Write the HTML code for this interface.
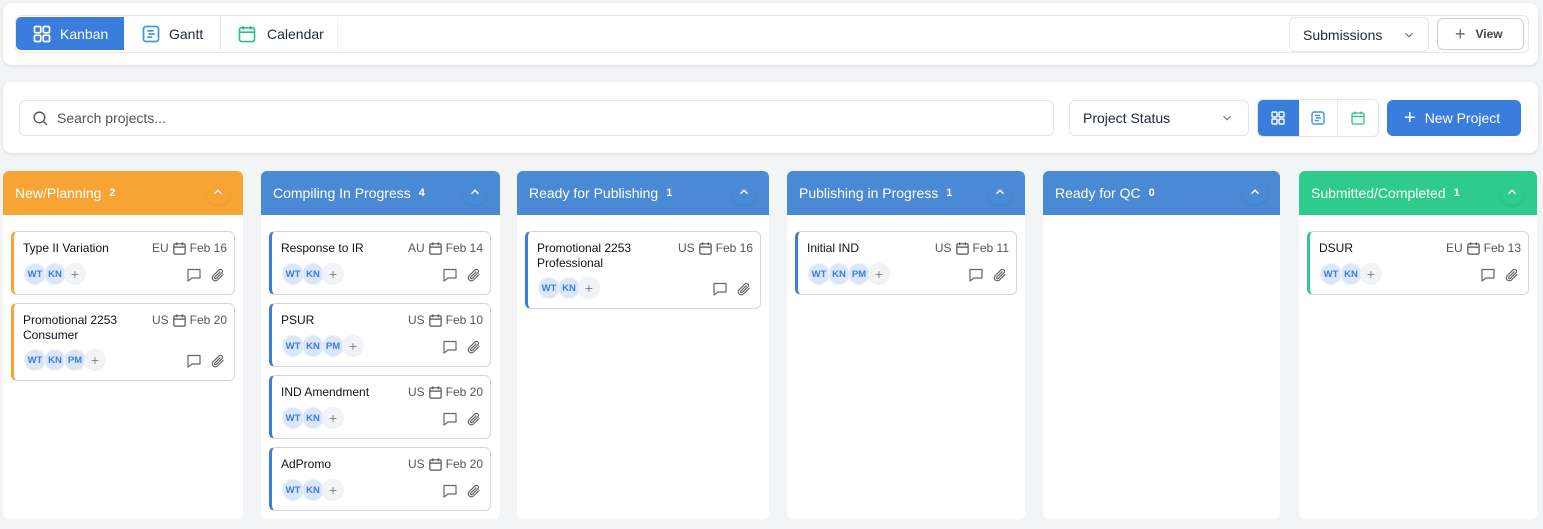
<!DOCTYPE html><html><head><style>
*{box-sizing:border-box;margin:0;padding:0}
body{width:1543px;height:529px;background:#f3f4f6;font-family:"Liberation Sans","DejaVu Sans",sans-serif;position:relative;overflow:hidden;color:#1f2937}
.a{position:absolute}
.card{position:absolute;background:#fff;border-radius:8px;box-shadow:0 1px 3px rgba(0,0,0,.12)}
.btn{position:absolute;display:flex;align-items:center;font-size:14px}
.col{position:absolute;top:171px;height:348px;background:#fff;border-radius:6px;overflow:hidden}
.hd{height:44px;color:#fff;font-size:14px;display:flex;align-items:center;padding-left:12px;position:relative}
.hd b{font-weight:normal}
.hd i{font-style:normal;font-size:11px;margin-left:8px;font-weight:bold}
.hd .ch{position:absolute;right:12px;top:8px;width:26px;height:26px;border-radius:50%;display:flex;align-items:center;justify-content:center;box-shadow:0 1px 2px rgba(0,0,0,.08)}
.k{position:absolute;background:#fff;border:1px solid #d3d8e0;border-left:3px solid;border-radius:6px;font-size:12px}
.k .t{position:absolute;left:9px;top:9px;line-height:15px;color:#111}
.k .m{position:absolute;right:7px;top:9px;color:#555;display:flex;align-items:center;gap:3px;line-height:15px}
.av{position:absolute;display:flex}
.av span{width:22px;height:22px;border-radius:50%;background:#dbe6f8;color:#3b7ddd;font-size:9.5px;font-weight:bold;display:flex;align-items:center;justify-content:center;margin-right:-2px;border:1px solid #eef2f8}
.av span.p{background:#f1f3f5;color:#888;font-size:14px;font-weight:normal}
.ic{position:absolute;right:8px;display:flex;gap:8px}
</style></head><body>
<svg width="0" height="0" style="position:absolute"><defs>
<symbol id="cal" viewBox="0 0 16 16"><rect x="2" y="3" width="12" height="11" rx="1.5" fill="none" stroke="currentColor" stroke-width="1.3"/><path d="M2 6.5h12M5 1.5v3M11 1.5v3" stroke="currentColor" stroke-width="1.3"/></symbol>
<symbol id="cm" viewBox="0 0 16 16"><path d="M2 2.5h12v8.5H6l-4 3z" fill="none" stroke="currentColor" stroke-width="1.2" stroke-linejoin="round"/></symbol>
<symbol id="cl" viewBox="0 0 16 16"><path d="M13 7.5l-5.5 5.5a3 3 0 0 1-4.3-4.3L9 2.9a2 2 0 0 1 2.9 2.9L6.2 11.5a1 1 0 0 1-1.4-1.4L10 4.9" fill="none" stroke="currentColor" stroke-width="1.2" stroke-linecap="round"/></symbol>
<symbol id="grid" viewBox="0 0 16 16"><g fill="none" stroke="currentColor" stroke-width="1.4"><rect x="2" y="2" width="5" height="5" rx="1"/><rect x="9" y="2" width="5" height="5" rx="1"/><rect x="2" y="9" width="5" height="5" rx="1"/><rect x="9" y="9" width="5" height="5" rx="1"/></g></symbol>
<symbol id="gantt" viewBox="0 0 16 16"><rect x="2" y="2" width="12" height="12" rx="2" fill="none" stroke="currentColor" stroke-width="1.4"/><path d="M5 5.5h5M6 8h5M5 10.5h4" stroke="currentColor" stroke-width="1.4"/></symbol>
<symbol id="up" viewBox="0 0 16 16"><path d="M4 10l4-4 4 4" fill="none" stroke="currentColor" stroke-width="1.6"/></symbol>
<symbol id="dn" viewBox="0 0 16 16"><path d="M4 6l4 4 4-4" fill="none" stroke="currentColor" stroke-width="1.2"/></symbol>
</defs></svg>

<div class="card" style="left:3px;top:3px;width:1535px;height:62px"></div>
<div class="a" style="left:15px;top:15px;width:1514px;height:38px;border:1px solid #e5e7eb;border-radius:6px"></div>
<div class="btn" style="left:16px;top:17px;width:108px;height:33px;background:#3b7ddd;color:#fff;border-radius:5px 0 0 5px;padding-left:16px"><svg width="20" height="20" style="color:#fff"><use href="#grid"/></svg><span style="margin-left:8px">Kanban</span></div>
<div class="btn" style="left:124px;top:17px;width:97px;height:33px;padding-left:17px;border-right:1px solid #e5e7eb"><svg width="20" height="20" style="color:#3b9ae6"><use href="#gantt"/></svg><span style="margin-left:8px">Gantt</span></div>
<div class="btn" style="left:221px;top:17px;width:117px;height:33px;padding-left:16px;border-right:1px solid #f0f1f3"><svg width="20" height="20" style="color:#22c77c"><use href="#cal"/></svg><span style="margin-left:10px">Calendar</span></div>
<div class="btn" style="left:1289px;top:17px;width:140px;height:35px;border:1px solid #e5e7eb;border-radius:6px;padding-left:13px">Submissions<svg width="14" height="14" style="margin-left:auto;margin-right:12px;color:#666"><use href="#dn"/></svg></div>
<div class="btn" style="left:1437px;top:18px;width:87px;height:32px;border:1px solid #c9ced6;border-radius:6px;padding-left:17px;font-size:12px;font-weight:bold;color:#444"><span style="font-size:18px;font-weight:normal;margin-right:10px;color:#666">+</span>View</div>

<div class="card" style="left:3px;top:82px;width:1535px;height:71px"></div>
<div class="btn" style="left:19px;top:100px;width:1035px;height:36px;border:1px solid #e2e5ea;border-radius:6px;padding-left:12px;color:#555"><svg width="17" height="17" viewBox="0 0 16 16"><circle cx="7" cy="7" r="5" fill="none" stroke="#555" stroke-width="1.3"/><path d="M11 11l3 3" stroke="#555" stroke-width="1.3"/></svg><span style="margin-left:8px">Search projects...</span></div>
<div class="btn" style="left:1069px;top:100px;width:180px;height:36px;border:1px solid #e2e5ea;border-radius:6px;padding-left:13px">Project Status<svg width="14" height="14" style="margin-left:auto;margin-right:14px;color:#666"><use href="#dn"/></svg></div>
<div class="a" style="left:1257px;top:99px;width:122px;height:38px;border:1px solid #e2e5ea;border-radius:6px;overflow:hidden;display:flex">
<div style="width:41px;background:#3b7ddd;display:flex;align-items:center;justify-content:center"><svg width="16" height="16" style="color:#fff"><use href="#grid"/></svg></div>
<div style="width:40px;border-right:1px solid #e5e7eb;display:flex;align-items:center;justify-content:center"><svg width="16" height="16" style="color:#3b9ae6"><use href="#gantt"/></svg></div>
<div style="width:40px;display:flex;align-items:center;justify-content:center"><svg width="16" height="16" style="color:#22c77c"><use href="#cal"/></svg></div></div>
<div class="btn" style="left:1387px;top:100px;width:134px;height:36px;background:#3b7ddd;color:#fff;border-radius:6px;padding-left:17px"><span style="font-size:20px;margin-right:9px;font-weight:300">+</span>New Project</div>

<div class="col" style="left:3px;width:240px"><div class="hd" style="background:#f6a535"><b>New/Planning</b><i>2</i><div class="ch"><svg width="14" height="14" style="color:#fff"><use href="#up"/></svg></div></div></div>
<div class="col" style="left:261px;width:239px"><div class="hd" style="background:#4a89d4"><b>Compiling In Progress</b><i>4</i><div class="ch"><svg width="14" height="14" style="color:#fff"><use href="#up"/></svg></div></div></div>
<div class="col" style="left:517px;width:252px"><div class="hd" style="background:#4a89d4"><b>Ready for Publishing</b><i>1</i><div class="ch"><svg width="14" height="14" style="color:#fff"><use href="#up"/></svg></div></div></div>
<div class="col" style="left:787px;width:238px"><div class="hd" style="background:#4a89d4"><b>Publishing in Progress</b><i>1</i><div class="ch"><svg width="14" height="14" style="color:#fff"><use href="#up"/></svg></div></div></div>
<div class="col" style="left:1043px;width:237px"><div class="hd" style="background:#4a89d4"><b>Ready for QC</b><i>0</i><div class="ch"><svg width="14" height="14" style="color:#fff"><use href="#up"/></svg></div></div></div>
<div class="col" style="left:1299px;width:238px"><div class="hd" style="background:#2ecb8c"><b>Submitted/Completed</b><i>1</i><div class="ch"><svg width="14" height="14" style="color:#fff"><use href="#up"/></svg></div></div></div>

<div class="k" style="left:11px;top:231px;width:224px;height:64px;border-left-color:#f6a535"><div class="t">Type II Variation</div><div class="m">EU <svg width="15" height="15"><use href="#cal"/></svg>Feb 16</div><div class="av" style="left:10px;top:31px"><span>WT</span><span>KN</span><span class="p">+</span></div><div class="ic" style="top:35px;color:#666"><svg width="16" height="16"><use href="#cm"/></svg><svg width="16" height="16"><use href="#cl"/></svg></div></div>
<div class="k" style="left:11px;top:303px;width:224px;height:78px;border-left-color:#f6a535"><div class="t">Promotional 2253<br>Consumer</div><div class="m">US <svg width="15" height="15"><use href="#cal"/></svg>Feb 20</div><div class="av" style="left:10px;top:45px"><span>WT</span><span>KN</span><span>PM</span><span class="p">+</span></div><div class="ic" style="top:49px;color:#666"><svg width="16" height="16"><use href="#cm"/></svg><svg width="16" height="16"><use href="#cl"/></svg></div></div>

<div class="k" style="left:269px;top:231px;width:222px;height:64px;border-left-color:#3b7ddd"><div class="t">Response to IR</div><div class="m">AU <svg width="15" height="15"><use href="#cal"/></svg>Feb 14</div><div class="av" style="left:10px;top:31px"><span>WT</span><span>KN</span><span class="p">+</span></div><div class="ic" style="top:35px;color:#666"><svg width="16" height="16"><use href="#cm"/></svg><svg width="16" height="16"><use href="#cl"/></svg></div></div>
<div class="k" style="left:269px;top:303px;width:222px;height:64px;border-left-color:#3b7ddd"><div class="t">PSUR</div><div class="m">US <svg width="15" height="15"><use href="#cal"/></svg>Feb 10</div><div class="av" style="left:10px;top:31px"><span>WT</span><span>KN</span><span>PM</span><span class="p">+</span></div><div class="ic" style="top:35px;color:#666"><svg width="16" height="16"><use href="#cm"/></svg><svg width="16" height="16"><use href="#cl"/></svg></div></div>
<div class="k" style="left:269px;top:375px;width:222px;height:64px;border-left-color:#3b7ddd"><div class="t">IND Amendment</div><div class="m">US <svg width="15" height="15"><use href="#cal"/></svg>Feb 20</div><div class="av" style="left:10px;top:31px"><span>WT</span><span>KN</span><span class="p">+</span></div><div class="ic" style="top:35px;color:#666"><svg width="16" height="16"><use href="#cm"/></svg><svg width="16" height="16"><use href="#cl"/></svg></div></div>
<div class="k" style="left:269px;top:447px;width:222px;height:64px;border-left-color:#3b7ddd"><div class="t">AdPromo</div><div class="m">US <svg width="15" height="15"><use href="#cal"/></svg>Feb 20</div><div class="av" style="left:10px;top:31px"><span>WT</span><span>KN</span><span class="p">+</span></div><div class="ic" style="top:35px;color:#666"><svg width="16" height="16"><use href="#cm"/></svg><svg width="16" height="16"><use href="#cl"/></svg></div></div>

<div class="k" style="left:525px;top:231px;width:236px;height:78px;border-left-color:#3b7ddd"><div class="t">Promotional 2253<br>Professional</div><div class="m">US <svg width="15" height="15"><use href="#cal"/></svg>Feb 16</div><div class="av" style="left:10px;top:45px"><span>WT</span><span>KN</span><span class="p">+</span></div><div class="ic" style="top:49px;color:#666"><svg width="16" height="16"><use href="#cm"/></svg><svg width="16" height="16"><use href="#cl"/></svg></div></div>

<div class="k" style="left:795px;top:231px;width:222px;height:64px;border-left-color:#3b7ddd"><div class="t">Initial IND</div><div class="m">US <svg width="15" height="15"><use href="#cal"/></svg>Feb 11</div><div class="av" style="left:10px;top:31px"><span>WT</span><span>KN</span><span>PM</span><span class="p">+</span></div><div class="ic" style="top:35px;color:#666"><svg width="16" height="16"><use href="#cm"/></svg><svg width="16" height="16"><use href="#cl"/></svg></div></div>

<div class="k" style="left:1307px;top:231px;width:222px;height:64px;border-left-color:#2ecb8c"><div class="t">DSUR</div><div class="m">EU <svg width="15" height="15"><use href="#cal"/></svg>Feb 13</div><div class="av" style="left:10px;top:31px"><span>WT</span><span>KN</span><span class="p">+</span></div><div class="ic" style="top:35px;color:#666"><svg width="16" height="16"><use href="#cm"/></svg><svg width="16" height="16"><use href="#cl"/></svg></div></div>
</body></html>
